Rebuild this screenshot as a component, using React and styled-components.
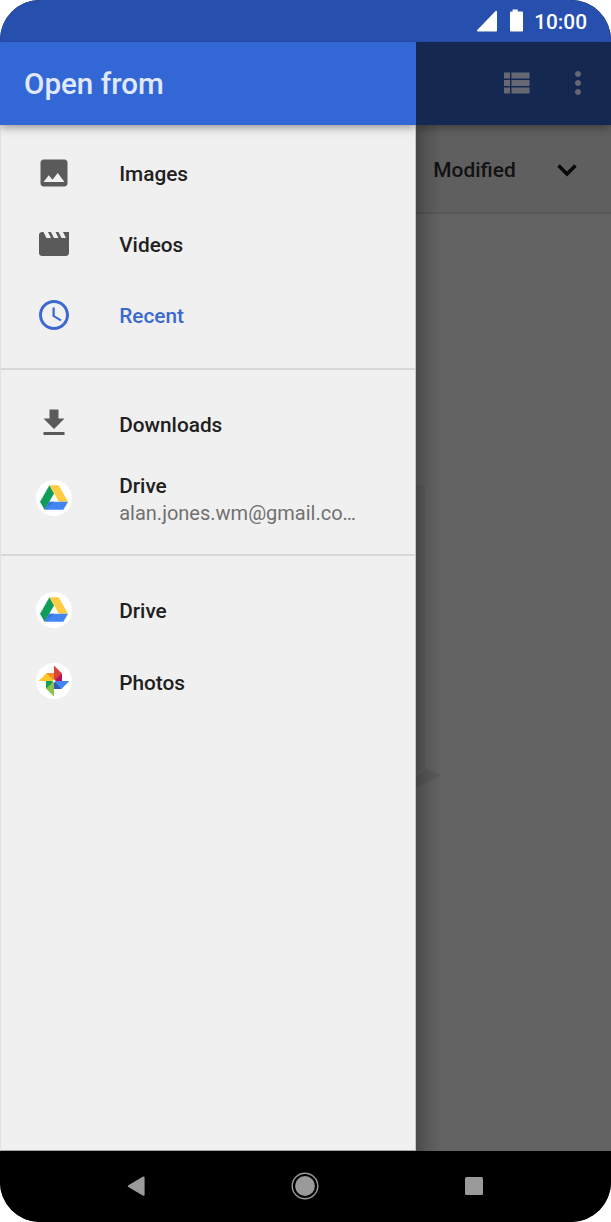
import React from "react";
import styled, {createGlobalStyle} from "styled-components";

const GlobalStyle = createGlobalStyle`
    body {
        margin: 0;
        background: #fff;
        font-family: Roboto, "Liberation Sans", sans-serif;
    }

    * {
        box-sizing: border-box;
    }
`

const Phone = styled.div`
    display: flex;
    flex-direction: column;
    width: 611px;
    height: 1222px;
    overflow: hidden;
    border-radius: 40px;
    background: #000;
`

const StatusBar = styled.div`
    display: flex;
    flex: none;
    align-items: center;
    justify-content: flex-end;
    height: 41.5px;
    padding: 1px 24px 0 0;
    background: #264fae;
    color: #fff;
    font-size: 20.8px;
    font-weight: 500;
`

const Clock = styled.span`
    margin-left: 10.5px;
    padding-top: 2px;
    line-height: 24px;
`

const Screen = styled.div`
    display: flex;
    flex: 1;
    min-height: 0;
`

const Drawer = styled.aside`
    display: flex;
    flex-direction: column;
    width: 416px;
    background: #f0f0f0;
`

const DrawerTitle = styled.h1`
    flex: none;
    height: 83.5px;
    margin: 0;
    padding-left: 24px;
    background: #3367d6;
    box-shadow: 0 2px 9px rgba(0, 0, 0, 0.42);
    clip-path: inset(0 0 -16px 0);
    color: #e0e9fb;
    font-size: 29.6px;
    font-weight: 500;
    line-height: 85px;
`

const DrawerBody = styled.nav`
    flex: 1;
    padding-top: 12px;
    border: solid;
    border-width: 0 1px 1px;
    border-color: #e2e2e2 #c6c6c6 #a4a4a4 #e2e2e2;
`

const Group = styled.div`
    padding-bottom: 17.5px;

    & + & {
        padding-top: 18px;
        border-top: 2px solid #d8d8d8;
    }
`

const Row = styled.div`
    display: flex;
    align-items: center;
    height: ${({$tall}) => $tall ? "78px" : "71.1px"};
    padding-left: 35px;
    color: ${({$active}) => $active ? "#3b69d0" : "#202020"};
`

const IconBox = styled.span`
    display: flex;
    flex: none;
    width: 36px;
    height: 36px;
    margin-right: 47.2px;
    color: ${({$active}) => $active ? "#3b69d0" : "#5a5a5a"};
`

const Label = styled.div`
    font-size: 20.8px;
    font-weight: 500;
    line-height: 27px;
    padding-top: 4px;
`

const Account = styled.div`
    color: #707070;
    font-size: 20px;
    font-weight: 400;
    line-height: 27px;
    white-space: nowrap;
`

const Backdrop = styled.main`
    position: relative;
    display: flex;
    flex: 1;
    flex-direction: column;
    background: #636363;

    &::before {
        content: "";
        position: absolute;
        inset: 0 auto 0 0;
        width: 26px;
        background: linear-gradient(to right, rgba(0, 0, 0, 0.26), rgba(0, 0, 0, 0.1) 45%, transparent);
    }
`

const Toolbar = styled.div`
    display: flex;
    flex: none;
    align-items: center;
    justify-content: flex-end;
    gap: 26px;
    height: 83.5px;
    padding-right: 15px;
    background: #142852;
    box-shadow: 0 2px 9px rgba(0, 0, 0, 0.4);
    clip-path: inset(0 0 -16px 0);
    color: #666873;
`

const SortBar = styled.div`
    display: flex;
    flex: none;
    align-items: center;
    justify-content: space-between;
    height: 88.5px;
    padding: 3px 26.5px 0 17.3px;
    border-bottom: 2px solid #585858;
    background: #5f5f5f;
    color: #121212;
    font-size: 20.9px;
    font-weight: 500;
`

const EmptyArt = styled.svg`
    position: absolute;
    top: 443px;
    left: 0;
`

const NavBar = styled.div`
    display: flex;
    flex: none;
    align-items: center;
    justify-content: space-between;
    height: 71.5px;
    padding: 0 120px 0 118.5px;
    background: #000;
    color: #9a9a9a;
`

const shapes = {
    images: "M21 19V5c0-1.1-.9-2-2-2H5c-1.1 0-2 .9-2 2v14c0 1.1.9 2 2 2h14c1.1 0 2-.9 2-2zM8.5 13.5l2.5 3.01L14.5 12l4.5 6H5l3.5-4.5z",
    videos: "M18 4l2 4h-3l-2-4h-2l2 4h-3l-2-4H8l2 4H7L5 4H4c-1.1 0-1.99.9-1.99 2L2 18c0 1.1.9 2 2 2h16c1.1 0 2-.9 2-2V4h-4z",
    recent: "M11.99 2C6.47 2 2 6.48 2 12s4.47 10 9.99 10C17.52 22 22 17.52 22 12S17.52 2 11.99 2zM12 20c-4.42 0-8-3.58-8-8s3.58-8 8-8 8 3.58 8 8-3.58 8-8 8zm.5-13H11v6l5.25 3.15.75-1.23-4.5-2.67z",
    downloads: "M19 9h-4V3H9v6H5l7 7 7-7zM5 18v2h14v-2H5z",
    list: "M4 14h4v-4H4v4zm0 5h4v-4H4v4zM4 9h4V5H4v4zm5 5h12v-4H9v4zm0 5h12v-4H9v4zM9 5v4h12V5H9z",
    more: "M12 8c1.1 0 2-.9 2-2s-.9-2-2-2-2 .9-2 2 .9 2 2 2zm0 2c-1.1 0-2 .9-2 2s.9 2 2 2 2-.9 2-2-.9-2-2-2zm0 6c-1.1 0-2 .9-2 2s.9 2 2 2 2-.9 2-2-.9-2-2-2z",
}

function Icon({name}) {
    return (
        <svg width="36" height="36" viewBox="0 0 24 24" fill="currentColor">
            <path d={shapes[name]}/>
        </svg>
    )
}

function DriveIcon() {
    return (
        <svg width="36" height="36" viewBox="0 0 36 36">
            <circle cx="18" cy="18" r="18" fill="#fff"/>
            <path d="M13.5 5.3L4 21.7l4.6 8.1L18.1 13.4z" fill="#109d59"/>
            <path d="M13.5 5.3h9.2L32 21.7h-9.2z" fill="#ffcd42"/>
            <path d="M13.2 21.7H32l-4.6 8.1H8.6z" fill="#4285f4"/>
            <path d="M13.2 21.7h5.2l-9.8 8.1z" fill="#2b65cf" opacity=".55"/>
        </svg>
    )
}

function PhotosIcon() {
    return (
        <svg width="36" height="36" viewBox="0 0 36 36">
            <circle cx="18" cy="18" r="18" fill="#fff"/>
            <path d="M18 2.6l8 8V18h-8z" fill="#db4437"/>
            <path d="M26 10.6V18h-8z" fill="#b3145b"/>
            <path d="M33.4 18l-8 8H18v-8z" fill="#4285f4"/>
            <path d="M25.4 26H18v-8z" fill="#3059be"/>
            <path d="M18 33.4l-8-8V18h8z" fill="#8bc34a"/>
            <path d="M10 25.4V18h8z" fill="#109d59"/>
            <path d="M2.6 18l8-8H18v8z" fill="#ffc727"/>
            <path d="M10.6 10H18v8z" fill="#fb8c23"/>
            <circle cx="18" cy="18" r="1.5" fill="#fff"/>
        </svg>
    )
}

const groups = [
    [
        {label: "Images", icon: <Icon name="images"/>},
        {label: "Videos", icon: <Icon name="videos"/>},
        {label: "Recent", icon: <Icon name="recent"/>, active: true},
    ],
    [
        {label: "Downloads", icon: <Icon name="downloads"/>},
        {label: "Drive", icon: <DriveIcon/>, account: "alan.jones.wm@gmail.co…"},
    ],
    [
        {label: "Drive", icon: <DriveIcon/>},
        {label: "Photos", icon: <PhotosIcon/>},
    ],
]

export default function App() {
    return (
        <>
            <GlobalStyle/>
            <Phone>
                <StatusBar>
                    <svg width="48" height="24" viewBox="0 0 48 24" fill="#fff">
                        <path d="M21 2.5v19.2a.8.8 0 0 1-.8.8H1.8c-.8 0-1.1-.8-.5-1.4L19.6 2.1c.6-.6 1.4-.3 1.4.4z"/>
                        <path d="M36.6.5h5.2v2h4.1c.6 0 1.1.5 1.1 1.1v17.8c0 .6-.5 1.1-1.1 1.1H35.1c-.6 0-1.1-.5-1.1-1.1V3.6c0-.6.5-1.1 1.1-1.1h1.5z"/>
                    </svg>
                    <Clock>10:00</Clock>
                </StatusBar>
                <Screen>
                    <Drawer>
                        <DrawerTitle>Open from</DrawerTitle>
                        <DrawerBody>
                            {groups.map((items, index) =>
                                <Group key={index}>
                                    {items.map((item) =>
                                        <Row key={item.label} $active={item.active} $tall={item.account}>
                                            <IconBox $active={item.active}>{item.icon}</IconBox>
                                            <div>
                                                <Label>{item.label}</Label>
                                                {item.account && <Account>{item.account}</Account>}
                                            </div>
                                        </Row>
                                    )}
                                </Group>
                            )}
                        </DrawerBody>
                    </Drawer>
                    <Backdrop>
                        <Toolbar>
                            <Icon name="list"/>
                            <Icon name="more"/>
                        </Toolbar>
                        <SortBar>
                            <span>Modified</span>
                            <svg width="36" height="36" viewBox="0 0 36 36" fill="none" stroke="#080808"
                                 strokeWidth="3.4">
                                <path d="M9.5 13.5l8.5 8.5 8.5-8.5"/>
                            </svg>
                        </SortBar>
                        <EmptyArt width="30" height="310" viewBox="0 0 30 310" fill="#000">
                            <path d="M0 0h5q4 0 4 4v280H0z" opacity=".04"/>
                            <path d="M0 303V292L10 284l14 5q2 1 0 2z" opacity=".08"/>
                        </EmptyArt>
                    </Backdrop>
                </Screen>
                <NavBar>
                    <svg width="34" height="30" viewBox="0 0 34 30" fill="currentColor">
                        <path d="M9.4 14.2L23.6 5.8q2-1 2 1v16.6q0 2-2 1L9.4 16q-1.6-.9 0-1.8z"/>
                    </svg>
                    <svg width="30" height="30" viewBox="0 0 30 30">
                        <circle cx="15" cy="15" r="9.9" fill="currentColor"/>
                        <circle cx="15" cy="15" r="12.8" fill="none" stroke="currentColor" strokeWidth="1.4"/>
                    </svg>
                    <svg width="34" height="30" viewBox="0 0 34 30" fill="currentColor">
                        <rect x="8" y="6" width="18" height="18" rx="1.5"/>
                    </svg>
                </NavBar>
            </Phone>
        </>
    )
}
